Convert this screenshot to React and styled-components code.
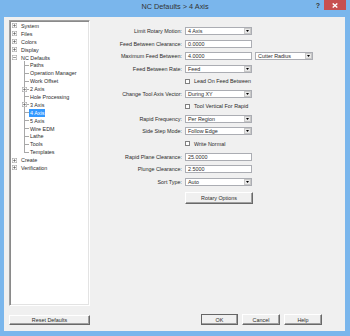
import styled, { createGlobalStyle } from "styled-components"

const GlobalStyle = createGlobalStyle`
  html, body {
    margin: 0;
    padding: 0;
  }
  body {
    width: 350px;
    height: 336px;
    overflow: hidden;
    font-family: "Liberation Sans", Arial, sans-serif;
  }
`

const Window = styled.div`
  box-sizing: border-box;
  width: 350px;
  height: 336px;
  display: flex;
  flex-direction: column;
  background: #7ab6ec;
`

const TitleBar = styled.div`
  height: 17px;
  display: grid;
  grid-template-columns: 1fr auto 1fr;
  align-items: start;
`

const Title = styled.div`
  grid-column: 2;
  font-size: 7.3px;
  line-height: 14px;
  color: #333;
  white-space: nowrap;
`

const TitleButtons = styled.div`
  grid-column: 3;
  justify-self: end;
  display: flex;
  align-items: flex-start;
  gap: 4px;
  margin-right: 4px;
`

const HelpGlyph = styled.span`
  font-size: 7px;
  font-weight: bold;
  line-height: 12px;
  color: #333;
`

const CloseButton = styled.div`
  width: 22px;
  height: 10px;
  background: #c75050;
  display: flex;
  align-items: center;
  justify-content: center;
`

const Client = styled.div`
  flex: 1;
  min-height: 0;
  margin: 0 5px 5px 4px;
  padding: 3px 0 6px 5px;
  background: #f0f0f0;
  display: flex;
  flex-direction: column;
  font-size: 5.4px;
  color: #2b2b2b;
`

const Main = styled.div`
  flex: 1;
  min-height: 0;
  display: flex;
`

const Tree = styled.div`
  box-sizing: border-box;
  width: 81px;
  flex: none;
  padding-top: 1px;
  background: #fff;
  border: 1px solid;
  border-color: #a0a0a0 #fff #fff #a0a0a0;
  box-shadow: inset 1px 1px #8a8a8a, inset -1px -1px #e3e3e3;
`

const TreeRow = styled.div`
  height: 7.9px;
  display: flex;
  align-items: center;
  padding-left: ${(p) => (p.$level === 0 ? 2 : 11)}px;
  white-space: nowrap;
`

const Expander = styled.svg`
  width: 5px;
  height: 5px;
  flex: none;
  margin-right: ${(p) => (p.$inline ? 0 : 3)}px;
  margin-left: ${(p) => (p.$inline ? 1 : 0)}px;
`

const Connector = styled.span`
  width: 8px;
  height: 100%;
  flex: none;
  display: flex;
  align-items: center;
  background-image: linear-gradient(#a8a8a8, #a8a8a8),
    linear-gradient(#a8a8a8, #a8a8a8);
  background-repeat: no-repeat;
  background-position: 3px 0, 3px 50%;
  background-size: 1px ${(p) => (p.$last ? "50%" : "100%")}, 5px 1px;
`

const TreeLabel = styled.span`
  height: 100%;
  display: flex;
  align-items: center;
  padding: 0 1px;
  background: ${(p) => (p.$selected ? "#3399ff" : "transparent")};
  color: ${(p) => (p.$selected ? "#fff" : "inherit")};
`

const Form = styled.div`
  display: grid;
  grid-template-columns: 92px 67px 58px;
  grid-auto-rows: 12.55px;
  column-gap: 3px;
  align-items: center;
  align-content: start;
  padding-top: 4.8px;
`

const Label = styled.span`
  grid-column: 1;
  justify-self: end;
  white-space: nowrap;
`

const Field = styled.div`
  box-sizing: border-box;
  height: 8px;
  display: flex;
  align-items: center;
  justify-content: space-between;
  padding-left: 2px;
  background: #fff;
  border: 1px solid #abadb3;
  white-space: nowrap;
`

const Arrow = styled.span`
  box-sizing: border-box;
  width: 7px;
  height: 6px;
  display: flex;
  align-items: center;
  justify-content: center;
  background: #e8e8e8;
  border: 1px solid #c8c8c8;
`

const CheckRow = styled.label`
  grid-column: 2 / 4;
  display: flex;
  align-items: center;
  gap: 4px;
  white-space: nowrap;
`

const CheckBox = styled.span`
  box-sizing: border-box;
  width: 5px;
  height: 5px;
  background: #fff;
  border: 1px solid #808080;
`

const Button = styled.button`
  box-sizing: border-box;
  width: ${(p) => p.$w}px;
  height: ${(p) => p.$h}px;
  padding: 0;
  font-family: "Liberation Sans", Arial, sans-serif;
  font-size: 5.4px;
  color: #2b2b2b;
  background: #f0f0f0;
  border: 1px solid;
  border-color: #fff #696969 #696969 #fff;
  box-shadow: inset -1px -1px #a0a0a0;
  ${(p) => (p.$default ? "outline: 1px solid #666; outline-offset: -1px;" : "")}
`

const OptionsButton = styled(Button)`
  grid-column: 2;
  align-self: start;
  margin-top: 4.3px;
`

const Footer = styled.div`
  height: 11px;
  margin-top: 8px;
  display: flex;
  align-items: flex-end;
`

const FooterButtons = styled.div`
  display: flex;
  gap: 4px;
  margin-left: auto;
  margin-right: 23px;
`

const Box = ({ open, inline }) => (
  <Expander viewBox="0 0 9 9" $inline={inline}>
    <rect x="0.5" y="0.5" width="8" height="8" fill="#fff" stroke="#a0a0a0" />
    <line x1="2" y1="4.5" x2="7" y2="4.5" stroke="#444" />
    {!open && <line x1="4.5" y1="2" x2="4.5" y2="7" stroke="#444" />}
  </Expander>
)

const DropDown = ({ children }) => (
  <Field>
    <span>{children}</span>
    <Arrow>
      <svg width="3" height="2" viewBox="0 0 3 2">
        <polygon points="0,0 3,0 1.5,2" fill="#000" />
      </svg>
    </Arrow>
  </Field>
)

const treeTop = [
  { label: "System" },
  { label: "Files" },
  { label: "Colors" },
  { label: "Display" },
]

const ncChildren = [
  { label: "Paths" },
  { label: "Operation Manager" },
  { label: "Work Offset" },
  { label: "2 Axis", box: true },
  { label: "Hole Processing" },
  { label: "3 Axis", box: true },
  { label: "4 Axis", selected: true },
  { label: "5 Axis" },
  { label: "Wire EDM" },
  { label: "Lathe" },
  { label: "Tools" },
  { label: "Templates" },
]

const treeBottom = [{ label: "Create" }, { label: "Verification" }]

const TopRow = ({ label, open }) => (
  <TreeRow $level={0}>
    <Box open={open} />
    <TreeLabel>{label}</TreeLabel>
  </TreeRow>
)

const App = () => {
  return (
    <>
      <GlobalStyle />
      <Window>
        <TitleBar>
          <Title>NC Defaults &gt; 4 Axis</Title>
          <TitleButtons>
            <HelpGlyph>?</HelpGlyph>
            <CloseButton>
              <svg width="6" height="5" viewBox="0 0 6 5">
                <path d="M0.7 0.4 L5.3 4.6 M5.3 0.4 L0.7 4.6" stroke="#fff" strokeWidth="1.3" />
              </svg>
            </CloseButton>
          </TitleButtons>
        </TitleBar>
        <Client>
          <Main>
            <Tree>
              {treeTop.map((item) => (
                <TopRow key={item.label} label={item.label} />
              ))}
              <TopRow label="NC Defaults" open />
              {ncChildren.map((item, i) => (
                <TreeRow key={item.label} $level={1}>
                  <Connector $last={i === ncChildren.length - 1}>
                    {item.box && <Box inline />}
                  </Connector>
                  <TreeLabel $selected={item.selected}>{item.label}</TreeLabel>
                </TreeRow>
              ))}
              {treeBottom.map((item) => (
                <TopRow key={item.label} label={item.label} />
              ))}
            </Tree>
            <Form>
              <Label>Limit Rotary Motion:</Label>
              <DropDown>4 Axis</DropDown>
              <span />

              <Label>Feed Between Clearance:</Label>
              <Field>0.0000</Field>
              <span />

              <Label>Maximum Feed Between:</Label>
              <Field>4.0000</Field>
              <DropDown>Cutter Radius</DropDown>

              <Label>Feed Between Rate:</Label>
              <DropDown>Feed</DropDown>
              <span />

              <CheckRow>
                <CheckBox />
                Lead On Feed Between
              </CheckRow>

              <Label>Change Tool Axis Vector:</Label>
              <DropDown>During XY</DropDown>
              <span />

              <CheckRow>
                <CheckBox />
                Tool Vertical For Rapid
              </CheckRow>

              <Label>Rapid Frequency:</Label>
              <DropDown>Per Region</DropDown>
              <span />

              <Label>Side Step Mode:</Label>
              <DropDown>Follow Edge</DropDown>
              <span />

              <CheckRow>
                <CheckBox />
                Write Normal
              </CheckRow>

              <Label>Rapid Plane Clearance:</Label>
              <Field>25.0000</Field>
              <span />

              <Label>Plunge Clearance:</Label>
              <Field>2.5000</Field>
              <span />

              <Label>Sort Type:</Label>
              <DropDown>Auto</DropDown>
              <span />

              <OptionsButton $w={68} $h={12}>
                Rotary Options
              </OptionsButton>
            </Form>
          </Main>
          <Footer>
            <Button $w={81} $h={10}>
              Reset Defaults
            </Button>
            <FooterButtons>
              <Button $w={37} $h={11} $default>
                OK
              </Button>
              <Button $w={38} $h={11}>
                Cancel
              </Button>
              <Button $w={38} $h={11}>
                Help
              </Button>
            </FooterButtons>
          </Footer>
        </Client>
      </Window>
    </>
  )
}

export default App
